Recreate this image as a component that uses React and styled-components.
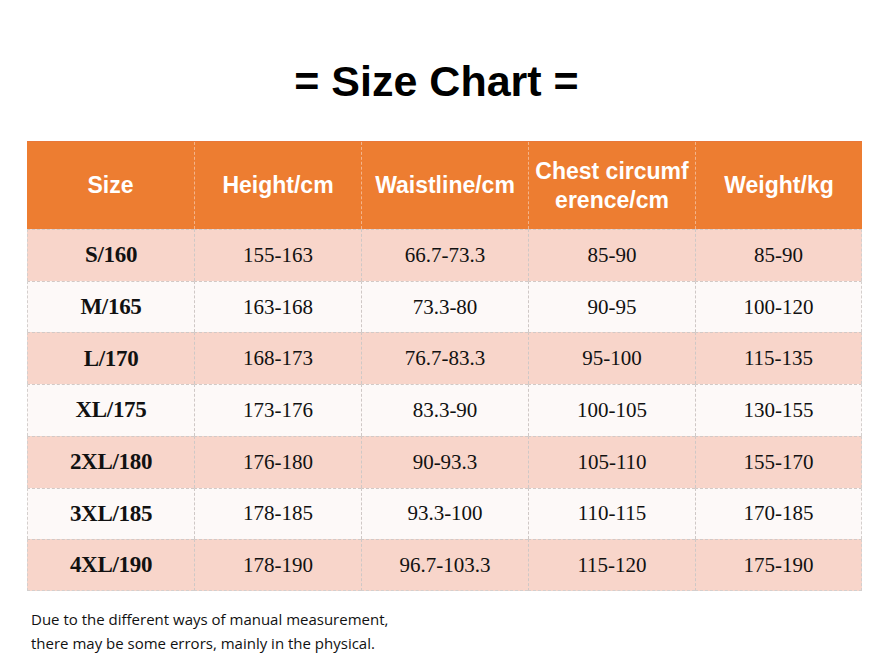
import React from "react";
import styled, { createGlobalStyle } from "styled-components";

const Global = createGlobalStyle`
  html, body {
    margin: 0;
    padding: 0;
    background: #ffffff;
  }
`;

const Page = styled.div`
  width: 890px;
  height: 670px;
  box-sizing: border-box;
  padding: 56px 28px 0 27px;
  display: flex;
  flex-direction: column;
  background: #ffffff;
`;

const Title = styled.h1`
  margin: 0;
  height: 85px;
  font-family: "Liberation Sans", Arial, sans-serif;
  font-weight: bold;
  font-size: 43px;
  line-height: 50px;
  text-align: center;
  color: #000000;
  padding-right: 16px;
`;

const Table = styled.div`
  display: grid;
  grid-template-columns: repeat(5, 1fr);
  grid-template-rows: 87px repeat(7, 1fr);
  height: 449px;
  border-top: 1px solid #e8773a;
`;

const HeadCell = styled.div`
  background: #ed7d31;
  color: #ffffff;
  font-family: "Liberation Sans", Arial, sans-serif;
  font-weight: bold;
  font-size: 23px;
  line-height: 29px;
  display: flex;
  align-items: center;
  justify-content: center;
  text-align: center;
  border-left: 1px dashed #f3b48a;
  &:first-child {
    border-left: none;
  }
`;

const Cell = styled.div`
  background: ${(p) => (p.$shade ? "#f8d5ca" : "#fdf9f8")};
  color: #111111;
  font-family: "Liberation Serif", "Times New Roman", serif;
  font-weight: ${(p) => (p.$bold ? "bold" : "normal")};
  font-size: ${(p) => (p.$bold ? "23px" : "21px")};
  letter-spacing: ${(p) => (p.$bold ? "-0.3px" : "0")};
  display: flex;
  align-items: center;
  justify-content: center;
  border-left: 1px dashed #cfc8c6;
  border-top: 1px dashed #d2c9c6;
  ${(p) => p.$first && "border-left: 1px dashed #d4cfcd;"}
  ${(p) => p.$last && "border-right: 1px dashed #d4cfcd;"}
  ${(p) => p.$bottom && "border-bottom: 1px dashed #d4cfcd;"}
`;

const Note = styled.p`
  margin: 16px 0 0 4px;
  font-family: "Open Sans", Lato, sans-serif;
  font-size: 15px;
  line-height: 24px;
  color: #111111;
`;

const headers = ["Size", "Height/cm", "Waistline/cm", "Chest circumf\nerence/cm", "Weight/kg"];

const rows = [
  ["S/160", "155-163", "66.7-73.3", "85-90", "85-90"],
  ["M/165", "163-168", "73.3-80", "90-95", "100-120"],
  ["L/170", "168-173", "76.7-83.3", "95-100", "115-135"],
  ["XL/175", "173-176", "83.3-90", "100-105", "130-155"],
  ["2XL/180", "176-180", "90-93.3", "105-110", "155-170"],
  ["3XL/185", "178-185", "93.3-100", "110-115", "170-185"],
  ["4XL/190", "178-190", "96.7-103.3", "115-120", "175-190"],
];

export default function App() {
  return (
    <Page>
      <Global />
      <Title>= Size Chart =</Title>
      <Table>
        {headers.map((h) => (
          <HeadCell key={h}>
            <span>
              {h.split("\n").map((line, i) => (
                <React.Fragment key={i}>
                  {i > 0 && <br />}
                  {line}
                </React.Fragment>
              ))}
            </span>
          </HeadCell>
        ))}
        {rows.map((row, r) =>
          row.map((val, c) => (
            <Cell
              key={r + "-" + c}
              $shade={r % 2 === 0}
              $bold={c === 0}
              $first={c === 0}
              $last={c === row.length - 1}
              $bottom={r === rows.length - 1}
            >
              {val}
            </Cell>
          ))
        )}
      </Table>
      <Note>
        Due to the different ways of manual measurement,
        <br />
        there may be some errors, mainly in the physical.
      </Note>
    </Page>
  );
}
